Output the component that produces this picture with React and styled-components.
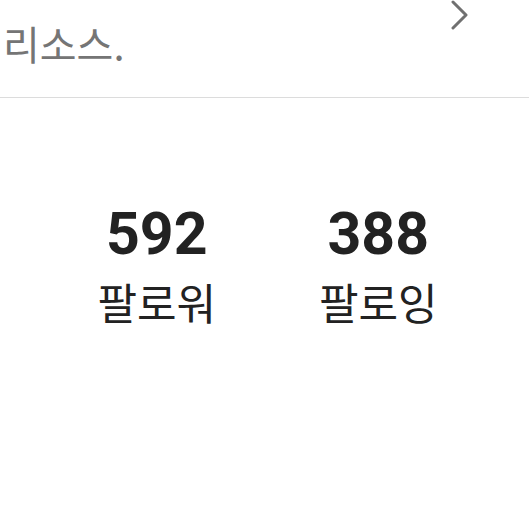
import styled, { createGlobalStyle } from "styled-components";

const GlobalStyle = createGlobalStyle`
  body {
    margin: 0;
    background: #ffffff;
    font-family: Roboto, "Noto Sans CJK KR", sans-serif;
  }
`;

const Page = styled.div`
  width: 529px;
  height: 524px;
  overflow: hidden;
  background: #ffffff;
`;

const Header = styled.div`
  height: 98px;
  border-bottom: 1px solid #dcdcdc;
  display: flex;
  justify-content: space-between;
  align-items: flex-start;
  padding: 0 60px 0 3px;
  box-sizing: border-box;
`;

const Title = styled.span`
  margin-top: 15px;
  font-size: 40px;
  line-height: 56px;
  color: #757575;
  font-family: "Noto Sans CJK KR", sans-serif;
`;

const Chevron = styled.svg`
  width: 18px;
  height: 30px;
`;

const Stats = styled.div`
  display: flex;
  padding: 103px 40px 0 46px;
`;

const Stat = styled.div`
  flex: 1;
  display: flex;
  flex-direction: column;
  align-items: center;
`;

const Count = styled.span`
  font-family: Roboto, sans-serif;
  font-weight: 700;
  font-size: 59px;
  line-height: 66px;
  color: #222222;
`;

const Label = styled.span`
  margin-top: 8px;
  font-family: "Noto Sans CJK KR", sans-serif;
  font-size: 43px;
  line-height: 52px;
  color: #222222;
`;

const stats = [
  { count: 592, label: "팔로워" },
  { count: 388, label: "팔로잉" },
];

export default function App() {
  return (
    <Page>
      <GlobalStyle />
      <Header>
        <Title>리소스.</Title>
        <Chevron viewBox="0 0 18 30">
          <path
            d="M2 2 L15 15 L2 28"
            fill="none"
            stroke="#707070"
            strokeWidth="3"
            strokeLinecap="round"
            strokeLinejoin="round"
          />
        </Chevron>
      </Header>
      <Stats>
        {stats.map((s) => (
          <Stat key={s.label}>
            <Count>{s.count}</Count>
            <Label>{s.label}</Label>
          </Stat>
        ))}
      </Stats>
    </Page>
  );
}
